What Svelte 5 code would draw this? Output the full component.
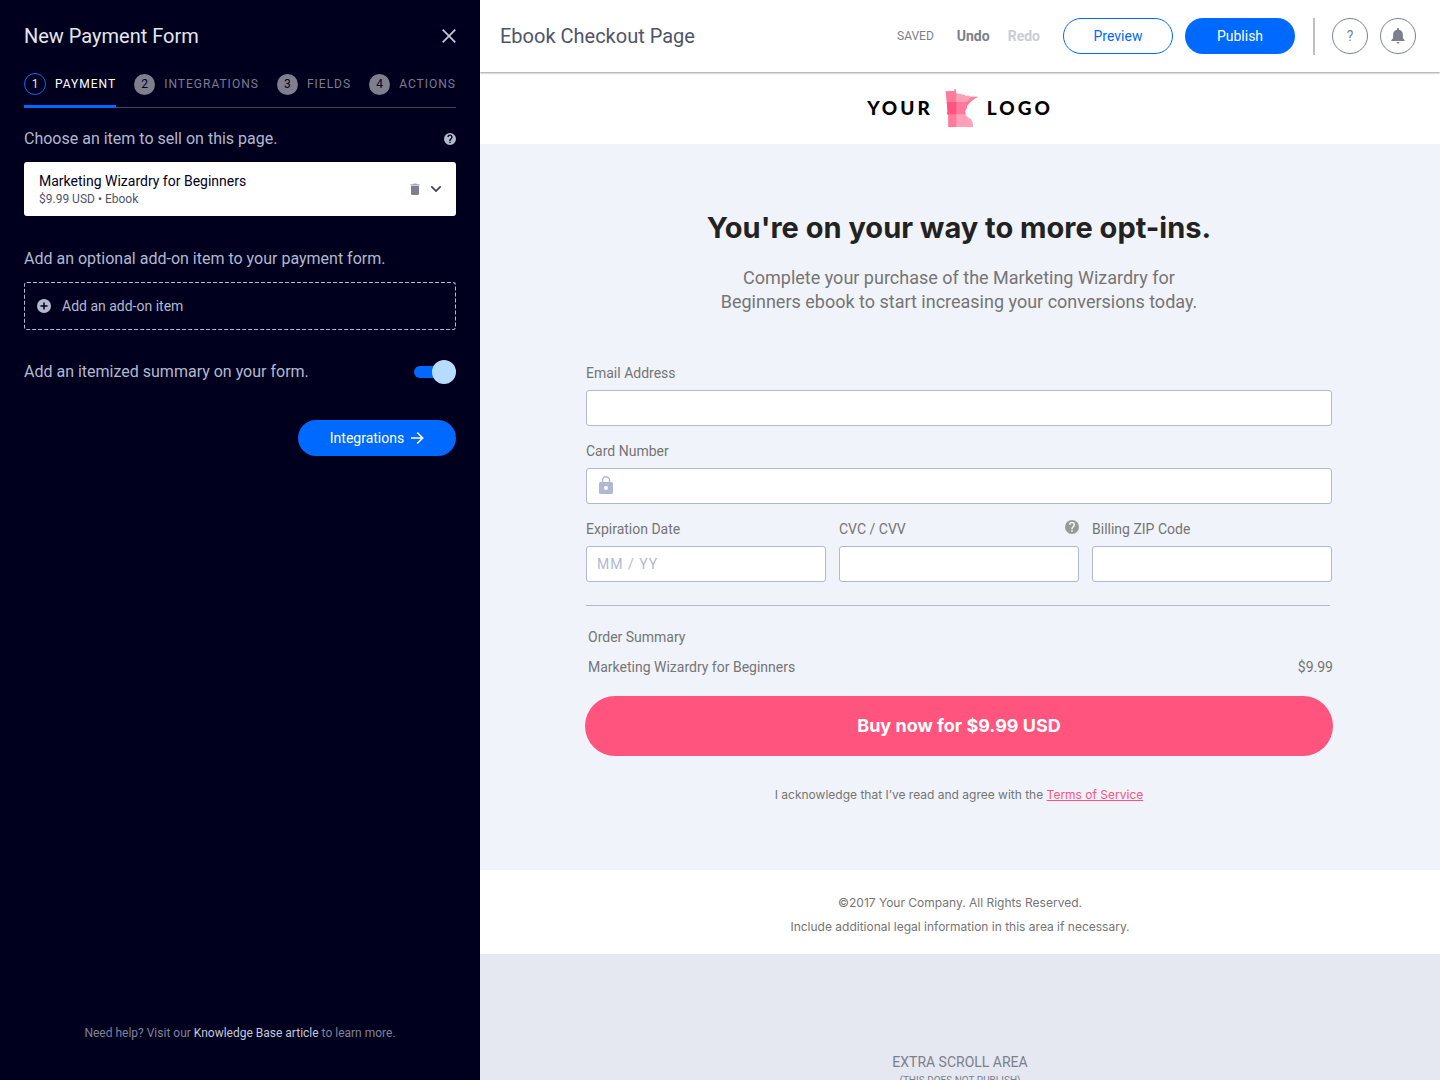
<script>
  const steps = ['Payment', 'Integrations', 'Fields', 'Actions'];
  let itemized = $state(true);
</script>

{#snippet helpIcon()}
  <svg viewBox="0 0 24 24" aria-hidden="true">
    <path fill="currentColor" d="M12 0a12 12 0 1 0 0 24 12 12 0 0 0 0-24zm1.4 20.2h-2.8v-2.8h2.8zm2.8-9.1-1.2 1.3c-1 1-1.6 1.8-1.6 3.500h-2.800v-.700c0-1.400.600-2.600 1.600-3.600l1.600-1.700c.500-.400.700-1 .700-1.700a2.500 2.500 0 0 0-5 0H6.800a5.200 5.200 0 0 1 10.400 0c0 1.100-.400 2.200-1 2.900z" />
  </svg>
{/snippet}

<div class="app">
  <aside class="sidebar">
    <header class="side-head">
      <h2>New Payment Form</h2>
      <button class="icon close" aria-label="Close">
        <svg viewBox="0 0 14 14" aria-hidden="true"><path d="M.7.7l12.600 12.600M13.300.7L.7 13.300" fill="none" stroke="currentColor" stroke-width="1.700" /></svg>
      </button>
    </header>

    <nav class="steps" aria-label="Form steps">
      {#each steps as step, i}
        <button class="step" class:active={i === 0}>
          <span class="num">{i + 1}</span>
          <span>{step}</span>
        </button>
      {/each}
    </nav>

    <div class="prompt choose">
      <p>Choose an item to sell on this page.</p>
      <button class="icon help" aria-label="Help">{@render helpIcon()}</button>
    </div>
    <div class="item">
      <div class="item-text">
        <strong>Marketing Wizardry for Beginners</strong>
        <span>$9.99 USD • Ebook</span>
      </div>
      <button class="icon trash" aria-label="Remove item">
        <svg viewBox="0 0 10 12" aria-hidden="true"><path opacity=".7" d="M.5 1.200h2.500l.7-.7h2.600l.7.7h2.500v1.200H.5z" fill="currentColor" /><path d="M1 3h8v7.800q0 1.200-1.200 1.200H2.200Q1 12 1 10.800z" fill="currentColor" /></svg>
      </button>
      <button class="icon chevron" aria-label="Choose another item">
        <svg viewBox="0 0 12 8" aria-hidden="true"><path d="M1.300 1.300L6 6l4.700-4.700" fill="none" stroke="currentColor" stroke-width="1.700" /></svg>
      </button>
    </div>

    <p class="prompt">Add an optional add-on item to your payment form.</p>
    <button class="addon">
      <svg class="dashes" aria-hidden="true"><rect width="100%" height="100%" rx="3" /></svg>
      <svg class="plus" viewBox="0 0 14 14" aria-hidden="true"><circle cx="7" cy="7" r="7" fill="currentColor" /><path d="M7 3.500v7M3.500 7h7" stroke="#00001e" stroke-width="1.500" /></svg>
      Add an add-on item
    </button>

    <label class="prompt toggle-row">
      <span>Add an itemized summary on your form.</span>
      <input type="checkbox" role="switch" class="toggle" bind:checked={itemized} />
    </label>

    <button class="pill primary next">
      Integrations
      <svg viewBox="0 0 14 14" aria-hidden="true"><path d="M1 7h11.500M7.200 1.500L12.700 7l-5.500 5.500" fill="none" stroke="currentColor" stroke-width="1.500" /></svg>
    </button>

    <footer class="side-foot">Need help? Visit our <a href="#kb">Knowledge Base article</a> to learn more.</footer>
  </aside>

  <div class="workspace">
    <header class="topbar">
      <h1>Ebook Checkout Page</h1>
      <span class="saved">SAVED</span>
      <button class="text-btn undo">Undo</button>
      <button class="text-btn redo" disabled>Redo</button>
      <button class="pill outline">Preview</button>
      <button class="pill primary">Publish</button>
      <span class="divider"></span>
      <button class="round" aria-label="Help">?</button>
      <button class="round" aria-label="Notifications">
        <svg viewBox="0 0 14 16" aria-hidden="true"><path d="M7 0a1 1 0 0 1 1 1v.7c2.500.5 3.900 2.300 3.900 4.800v3.700l1.700 1.900v.8H.4v-.8l1.700-1.900V6.500C2.100 4 3.500 2.200 6 1.700V1a1 1 0 0 1 1-1zM5.500 14h3a1.500 1.500 0 0 1-3 0z" fill="currentColor" /></svg>
      </button>
    </header>

    <main>
      <div class="brand">
        <span>YOUR</span>
        <svg viewBox="0 0 34 39" aria-hidden="true">
          <defs>
            <clipPath id="state">
              <path d="M.7 2.300H9.500V0l1 .3.800 4 3.700.400 1.500.6 2.500.2 2 1.500 2-.7 3 1.500 2.500-.4 4.500.3-3.600 2-3.700 3L22 16.700V19l-2 3 .7 4 3 3 2.300 1.300 1.700 3.400L28 38H3.300V26.300L2 24.700l.7-2L1.700 12z" />
            </clipPath>
          </defs>
          <g clip-path="url(#state)">
            <rect width="34" height="39" fill="#ffa0b8" />
            <rect width="11.300" height="39" fill="#ff7a9b" />
            <rect y="13" width="34" height="12.300" fill="#ff7a9b" />
            <rect y="13" width="11.300" height="12.300" fill="#ff5580" />
            <path d="M22 13l4-4.500L34 7v6z" fill="#ff7a9b" />
          </g>
        </svg>
        <span>LOGO</span>
      </div>

      <section class="checkout">
        <h2>You're on your way to more opt-ins.</h2>
        <p class="lead">Complete your purchase of the Marketing Wizardry for<br />Beginners ebook to start increasing your conversions today.</p>

        <form onsubmit={(e) => e.preventDefault()}>
          <div class="field">
            <label for="email">Email Address</label>
            <input id="email" type="email" />
          </div>
          <div class="field">
            <label for="card">Card Number</label>
            <div class="with-icon">
              <input id="card" type="text" inputmode="numeric" />
              <svg viewBox="0 0 14 18" aria-hidden="true"><path fill="currentColor" fill-rule="evenodd" d="M12.500 6H11.200V4.200a4.200 4.200 0 0 0-8.400 0V6H1.500A1.500 1.500 0 0 0 0 7.500v9A1.500 1.500 0 0 0 1.500 18h11a1.500 1.500 0 0 0 1.500-1.500v-9A1.500 1.500 0 0 0 12.500 6zM4.200 4.200a2.800 2.800 0 0 1 5.600 0V6H4.200zM7 14a2 2 0 1 1 0-4 2 2 0 0 1 0 4z" /></svg>
            </div>
          </div>
          <div class="row">
            <div class="field">
              <label for="exp">Expiration Date</label>
              <input id="exp" type="text" placeholder="MM / YY" />
            </div>
            <div class="field">
              <div class="label-row">
                <label for="cvc">CVC / CVV</label>
                <button type="button" class="icon cvc-help" aria-label="About the security code">{@render helpIcon()}</button>
              </div>
              <input id="cvc" type="text" />
            </div>
            <div class="field">
              <label for="zip">Billing ZIP Code</label>
              <input id="zip" type="text" />
            </div>
          </div>

          <hr />
          <div class="summary">
            <p>Order Summary</p>
            <p class="line"><span>Marketing Wizardry for Beginners</span><span>$9.99</span></p>
          </div>
          <button class="buy">Buy now for $9.99 USD</button>
        </form>
        <p class="ack">I acknowledge that I’ve read and agree with the <a href="#terms">Terms of Service</a></p>
      </section>

      <footer class="legal">
        <p>©2017 Your Company. All Rights Reserved.</p>
        <p>Include additional legal information in this area if necessary.</p>
      </footer>

      <div class="extra">
        <p>EXTRA SCROLL AREA</p>
        <small>(THIS DOES NOT PUBLISH)</small>
      </div>
    </main>
  </div>
</div>

<style>
  :global(body) {
    margin: 0;
  }
  .app,
  .app :global(*) {
    box-sizing: border-box;
  }
  .app {
    display: grid;
    grid-template-columns: minmax(0, 1fr) minmax(0, 2fr);
    height: 100vh;
    overflow: hidden;
    font-family: Roboto, 'Liberation Sans', sans-serif;
    font-size: 14px;
    line-height: 20px;
  }
  h1,
  h2,
  p {
    margin: 0;
    font-weight: 400;
  }
  button,
  input {
    font: inherit;
    color: inherit;
  }
  button {
    padding: 0;
    border: 0;
    background: none;
    cursor: pointer;
  }
  svg {
    display: block;
    flex: none;
  }

  .sidebar {
    display: flex;
    flex-direction: column;
    padding: 20px 24px 36px;
    background: #00001e;
    color: #b3b9cf;
    overflow: auto;
  }
  .side-head {
    display: flex;
    align-items: center;
    justify-content: space-between;
    height: 32px;
  }
  .side-head h2 {
    font-size: 20px;
    color: #e4e6ee;
  }
  .close svg {
    width: 14px;
    height: 14px;
    color: #c4c9da;
  }
  .steps {
    display: flex;
    justify-content: space-between;
    height: 46px;
    margin-top: 10px;
    border-bottom: 1px solid #454459;
  }
  .step {
    display: flex;
    align-items: center;
    gap: 9px;
    height: 46px;
    padding-top: 1px;
    border-bottom: 3px solid transparent;
    color: #7c7b8e;
    font-size: 12px;
    letter-spacing: 1px;
    text-transform: uppercase;
  }
  .num {
    display: grid;
    place-items: center;
    width: 21px;
    height: 21px;
    border-radius: 50%;
    background: #7f7e8f;
    color: #00001e;
    letter-spacing: 0;
  }
  .step.active {
    border-color: #0069ff;
    color: #fff;
  }
  .active .num {
    width: 22px;
    height: 22px;
    border: 1px solid #0069ff;
    background: none;
    color: #e4e6ee;
  }
  .prompt {
    font-size: 16px;
    line-height: 24px;
  }
  .choose {
    display: flex;
    align-items: center;
    justify-content: space-between;
    margin-top: 19px;
  }
  .help svg {
    width: 12px;
    height: 12px;
  }
  .item {
    display: flex;
    align-items: center;
    margin: 11px 0 31px;
    padding: 9px 14px 9px 15px;
    border-radius: 3px;
    background: #fff;
  }
  .item-text {
    flex: 1;
    display: flex;
    flex-direction: column;
  }
  .item-text strong {
    color: #00001e;
    font-weight: 400;
  }
  .item-text span {
    color: #50546a;
    font-size: 12px;
    line-height: 16px;
  }
  .trash {
    color: #7b808c;
  }
  .trash svg {
    width: 10px;
    height: 12px;
  }
  .chevron {
    margin-left: 10px;
    color: #3c4154;
  }
  .chevron svg {
    width: 12px;
    height: 8px;
  }
  .addon {
    position: relative;
    display: flex;
    align-items: center;
    gap: 11px;
    height: 48px;
    margin: 11px 0 30px;
    padding: 0 13px;
  }
  .dashes {
    position: absolute;
    inset: 0;
    width: 100%;
    height: 100%;
    border-radius: 3px;
  }
  .dashes rect {
    fill: none;
    stroke: #b3b9cf;
    stroke-width: 2;
    stroke-dasharray: 4 2;
  }
  .plus {
    width: 14px;
    height: 14px;
  }
  .toggle-row {
    display: flex;
    align-items: center;
    justify-content: space-between;
  }
  .toggle {
    appearance: none;
    display: grid;
    align-items: center;
    width: 42px;
    height: 24px;
    margin: 0;
    cursor: pointer;
  }
  .toggle::before,
  .toggle::after {
    content: '';
    grid-area: 1 / 1;
  }
  .toggle::before {
    height: 12px;
    border-radius: 6px;
    background: #454459;
  }
  .toggle::after {
    width: 24px;
    height: 24px;
    border-radius: 50%;
    background: #b8dcff;
  }
  .toggle:checked::before {
    background: #0069ff;
  }
  .toggle:checked::after {
    justify-self: end;
  }
  .pill {
    height: 36px;
    border-radius: 18px;
    width: 110px;
  }
  .primary {
    background: #0069ff;
    color: #fff;
  }
  .outline {
    border: 1px solid #0069ff;
    color: #0069ff;
  }
  .next {
    display: flex;
    align-items: center;
    justify-content: center;
    gap: 6px;
    flex: none;
    align-self: flex-end;
    width: 158px;
    margin-top: 36px;
  }
  .next svg {
    width: 14px;
    height: 14px;
  }
  .side-foot {
    margin-top: auto;
    color: #7f8398;
    font-size: 12px;
    line-height: 22px;
    text-align: center;
  }
  .side-foot a {
    color: #c4c9da;
    text-decoration: none;
  }

  .workspace {
    display: flex;
    flex-direction: column;
    min-height: 0;
    background: #e5e8f1;
  }
  .topbar {
    z-index: 1;
    display: flex;
    flex: none;
    align-items: center;
    height: 72px;
    padding: 0 24px 0 20px;
    background: #fff;
    box-shadow: 0 1px 2px rgba(0, 0, 0, 0.4);
  }
  .topbar h1 {
    margin-right: auto;
    color: #50546a;
    font-size: 20px;
  }
  .saved {
    color: #7b808c;
    font-size: 12px;
  }
  .text-btn {
    font-weight: 700;
  }
  .undo {
    margin-left: 23px;
    color: #7b808c;
  }
  .redo {
    margin: 0 23px 0 18px;
    color: #cacdd4;
  }
  .outline {
    margin-right: 12px;
  }
  .divider {
    width: 2px;
    height: 37px;
    margin: 0 17px 0 18px;
    background: #bdc0c7;
  }
  .round {
    display: grid;
    place-items: center;
    width: 36px;
    height: 36px;
    border: 1px solid #7b808c;
    border-radius: 50%;
    color: #7b808c;
  }
  .round + .round {
    margin-left: 12px;
  }
  .round svg {
    width: 14px;
    height: 16px;
  }

  main {
    flex: 1;
    overflow-y: auto;
    scrollbar-width: none;
  }
  .brand {
    display: flex;
    align-items: center;
    justify-content: center;
    height: 72px;
    background: #fff;
    color: #000;
    font-family: Lato, sans-serif;
    font-size: 19px;
    font-weight: 900;
    letter-spacing: 3px;
  }
  .brand svg {
    width: 34px;
    height: 39px;
    margin: 0 8px 0 12px;
  }
  .checkout {
    padding: 64px 107px 65px 105px;
    background: #f0f3f9;
    color: #757575;
  }
  .checkout h2 {
    color: #222;
    font-family: Inter, sans-serif;
    font-size: 29px;
    font-weight: 700;
    line-height: 40px;
    text-align: center;
  }
  .lead {
    margin-top: 18px;
    font-size: 18px;
    line-height: 24px;
    text-align: center;
  }
  form {
    margin-top: 49px;
  }
  .field {
    display: flex;
    flex-direction: column;
    gap: 7px;
    margin: 0 1px 15px;
  }
  .field input {
    width: 100%;
    height: 36px;
    padding: 0 10px;
    border: 1px solid #b0b9cf;
    border-radius: 3px;
    background: #fff;
  }
  .field input::placeholder {
    color: #b0b9cf;
    letter-spacing: 1px;
    opacity: 1;
  }
  .with-icon {
    position: relative;
  }
  .with-icon input {
    padding-left: 36px;
  }
  .with-icon svg {
    position: absolute;
    top: 8px;
    left: 13px;
    width: 14px;
    height: 18px;
    color: #b0b9cf;
  }
  .row {
    display: grid;
    grid-template-columns: repeat(3, minmax(0, 1fr));
    gap: 13px;
    margin: 0 1px;
  }
  .row .field {
    margin: 0;
  }
  .label-row {
    display: flex;
    align-items: flex-start;
    justify-content: space-between;
  }
  .cvc-help {
    padding-top: 1px;
    color: #999;
  }
  .cvc-help svg {
    width: 14px;
    height: 14px;
  }
  hr {
    margin: 23px 3px 21px 1px;
    border: 0;
    border-top: 1px solid #b0b9cf;
  }
  .summary {
    padding-left: 3px;
  }
  .line {
    display: flex;
    justify-content: space-between;
    margin-top: 10px;
  }
  .buy {
    width: 100%;
    height: 60px;
    margin-top: 19px;
    border-radius: 30px;
    background: #ff547d;
    color: #fff;
    font-family: Inter, sans-serif;
    font-size: 18px;
    font-weight: 700;
  }
  .ack {
    margin-top: 29px;
    font-family: Inter, sans-serif;
    font-size: 12px;
    text-align: center;
  }
  .ack a {
    color: #ff547d;
  }
  .legal {
    padding: 21px 0 15px;
    background: #fff;
    color: #757575;
    font-family: Inter, sans-serif;
    font-size: 12px;
    line-height: 24px;
    text-align: center;
  }
  .extra {
    padding: 98px 0 40px;
    color: #7b808c;
    text-align: center;
  }
  .extra small {
    display: block;
    font-size: 10px;
    line-height: 18px;
  }
</style>
